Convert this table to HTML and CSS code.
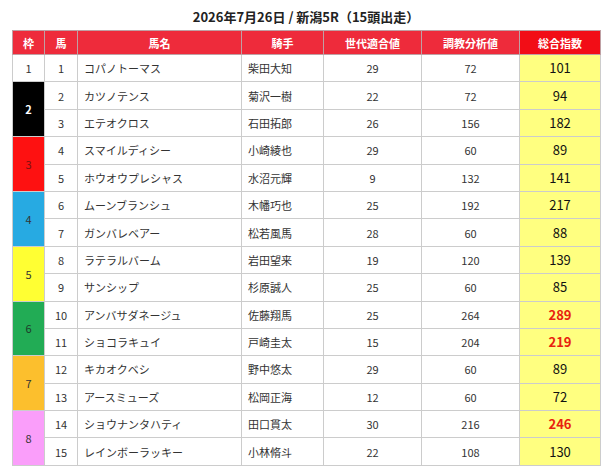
FILE: index.html
```html
<!DOCTYPE html>
<html lang="ja">
<head>
<meta charset="utf-8">
<link rel="stylesheet" href="styles.css">
</head>
<body>
<div class="wrap">
  <h1 class="title">2026年7月26日 / 新潟5R（15頭出走）</h1>
  <table class="race">
    <colgroup>
      <col class="c-waku"><col class="c-uma"><col class="c-name"><col class="c-jockey"><col class="c-gen"><col class="c-train"><col class="c-total">
    </colgroup>
    <thead>
      <tr>
        <th>枠</th><th>馬</th><th>馬名</th><th>騎手</th><th>世代適合値</th><th>調教分析値</th><th class="th-total">総合指数</th>
      </tr>
    </thead>
    <tbody>
      <tr><td class="waku w1">1</td><td>1</td><td class="left">コパノトーマス</td><td class="left">柴田大知</td><td>29</td><td>72</td><td class="total">101</td></tr>
      <tr><td class="waku w2" rowspan="2">2</td><td>2</td><td class="left">カツノテンス</td><td class="left">菊沢一樹</td><td>22</td><td>72</td><td class="total">94</td></tr>
      <tr><td>3</td><td class="left">エテオクロス</td><td class="left">石田拓郎</td><td>26</td><td>156</td><td class="total">182</td></tr>
      <tr><td class="waku w3" rowspan="2">3</td><td>4</td><td class="left">スマイルディシー</td><td class="left">小崎綾也</td><td>29</td><td>60</td><td class="total">89</td></tr>
      <tr><td>5</td><td class="left">ホウオウプレシャス</td><td class="left">水沼元輝</td><td>9</td><td>132</td><td class="total">141</td></tr>
      <tr><td class="waku w4" rowspan="2">4</td><td>6</td><td class="left">ムーンブランシュ</td><td class="left">木幡巧也</td><td>25</td><td>192</td><td class="total">217</td></tr>
      <tr><td>7</td><td class="left">ガンバレベアー</td><td class="left">松若風馬</td><td>28</td><td>60</td><td class="total">88</td></tr>
      <tr><td class="waku w5" rowspan="2">5</td><td>8</td><td class="left">ラテラルバーム</td><td class="left">岩田望来</td><td>19</td><td>120</td><td class="total">139</td></tr>
      <tr><td>9</td><td class="left">サンシップ</td><td class="left">杉原誠人</td><td>25</td><td>60</td><td class="total">85</td></tr>
      <tr><td class="waku w6" rowspan="2">6</td><td>10</td><td class="left">アンバサダネージュ</td><td class="left">佐藤翔馬</td><td>25</td><td>264</td><td class="total hot">289</td></tr>
      <tr><td>11</td><td class="left">ショコラキュイ</td><td class="left">戸崎圭太</td><td>15</td><td>204</td><td class="total hot">219</td></tr>
      <tr><td class="waku w7" rowspan="2">7</td><td>12</td><td class="left">キカオクベシ</td><td class="left">野中悠太</td><td>29</td><td>60</td><td class="total">89</td></tr>
      <tr><td>13</td><td class="left">アースミューズ</td><td class="left">松岡正海</td><td>12</td><td>60</td><td class="total">72</td></tr>
      <tr><td class="waku w8" rowspan="2">8</td><td>14</td><td class="left">ショウナンタハティ</td><td class="left">田口貫太</td><td>30</td><td>216</td><td class="total hot">246</td></tr>
      <tr><td>15</td><td class="left">レインボーラッキー</td><td class="left">小林脩斗</td><td>22</td><td>108</td><td class="total">130</td></tr>
    </tbody>
  </table>
</div>
</body>
</html>
```
FILE: styles.css
```css
html, body {
  margin: 0;
  padding: 0;
  background: #ffffff;
}
body {
  font-family: "Noto Sans CJK JP", "Noto Sans", sans-serif;
  color: #333333;
}
.wrap {
  padding: 8px 12px 0 12px;
}
.title {
  margin: 0 0 4px 0;
  font-size: 13px;
  line-height: 18px;
  font-weight: bold;
  text-align: center;
  color: #222222;
}
.race {
  width: 588px;
  border-collapse: collapse;
  table-layout: fixed;
  font-size: 11px;
}
.c-waku { width: 32px; }
.c-uma { width: 33px; }
.c-name { width: 164px; }
.c-jockey { width: 82px; }
.c-gen { width: 98px; }
.c-train { width: 98px; }
.c-total { width: 81px; }

.race th {
  background: #ee2b3b;
  color: #ffffff;
  font-weight: bold;
  font-size: 11px;
  height: 23px;
  padding: 0;
  border: 1px solid #bfa0a4;
  text-align: center;
  line-height: 14px;
}
.race th.th-total {
  background: #f20d16;
}
.race td {
  height: 26.4px;
  padding: 0;
  border: 1px solid #cccccc;
  text-align: center;
  line-height: 14px;
}
.race td.left {
  text-align: left;
  padding-left: 6px;
}
.race td.total {
  background: #ffff80;
  color: #111111;
  font-size: 13px;
}
.race td.hot {
  color: #e8220e;
  font-weight: bold;
}
.waku.w1 { background: #ffffff; }
.waku.w2 { background: #000000; color: #ffffff; font-weight: bold; }
.waku.w3 { background: #fe1111; color: #7a1010; }
.waku.w4 { background: #27aae2; }
.waku.w5 { background: #ffff33; }
.waku.w6 { background: #22ac55; color: #1e3b2a; }
.waku.w7 { background: #fcbf2d; }
.waku.w8 { background: #fa9efa; }
```
